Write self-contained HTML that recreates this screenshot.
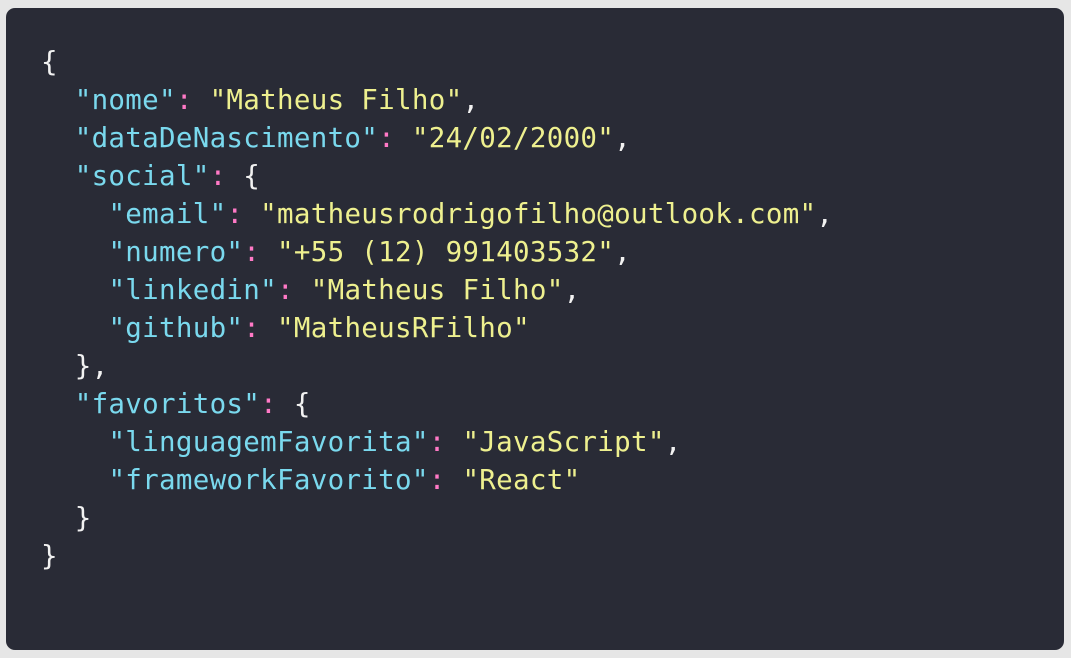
<!DOCTYPE html>
<html><head><style>
html,body{margin:0;padding:0;width:1071px;height:658px;background:#e6e6e6;overflow:hidden}
.card{position:absolute;left:6px;top:8px;width:1058px;height:642px;background:#292b36;border-radius:9px}
pre{position:absolute;left:41px;top:43px;margin:0;font-family:"DejaVu Sans Mono","Liberation Mono",monospace;font-size:27.5px;line-height:38px;color:#f2f2f2;letter-spacing:0.3px}
.k{color:#7ad9ee}.s{color:#eef08f}.p{color:#ff79c6}
</style></head><body><div class="card"></div>
<pre>{
  <span class="k">"nome"</span><span class="p">:</span> <span class="s">"Matheus Filho"</span>,
  <span class="k">"dataDeNascimento"</span><span class="p">:</span> <span class="s">"24/02/2000"</span>,
  <span class="k">"social"</span><span class="p">:</span> {
    <span class="k">"email"</span><span class="p">:</span> <span class="s">"matheusrodrigofilho@outlook.com"</span>,
    <span class="k">"numero"</span><span class="p">:</span> <span class="s">"+55 (12) 991403532"</span>,
    <span class="k">"linkedin"</span><span class="p">:</span> <span class="s">"Matheus Filho"</span>,
    <span class="k">"github"</span><span class="p">:</span> <span class="s">"MatheusRFilho"</span>
  },
  <span class="k">"favoritos"</span><span class="p">:</span> {
    <span class="k">"linguagemFavorita"</span><span class="p">:</span> <span class="s">"JavaScript"</span>,
    <span class="k">"frameworkFavorito"</span><span class="p">:</span> <span class="s">"React"</span>
  }
}</pre>
</body></html>
